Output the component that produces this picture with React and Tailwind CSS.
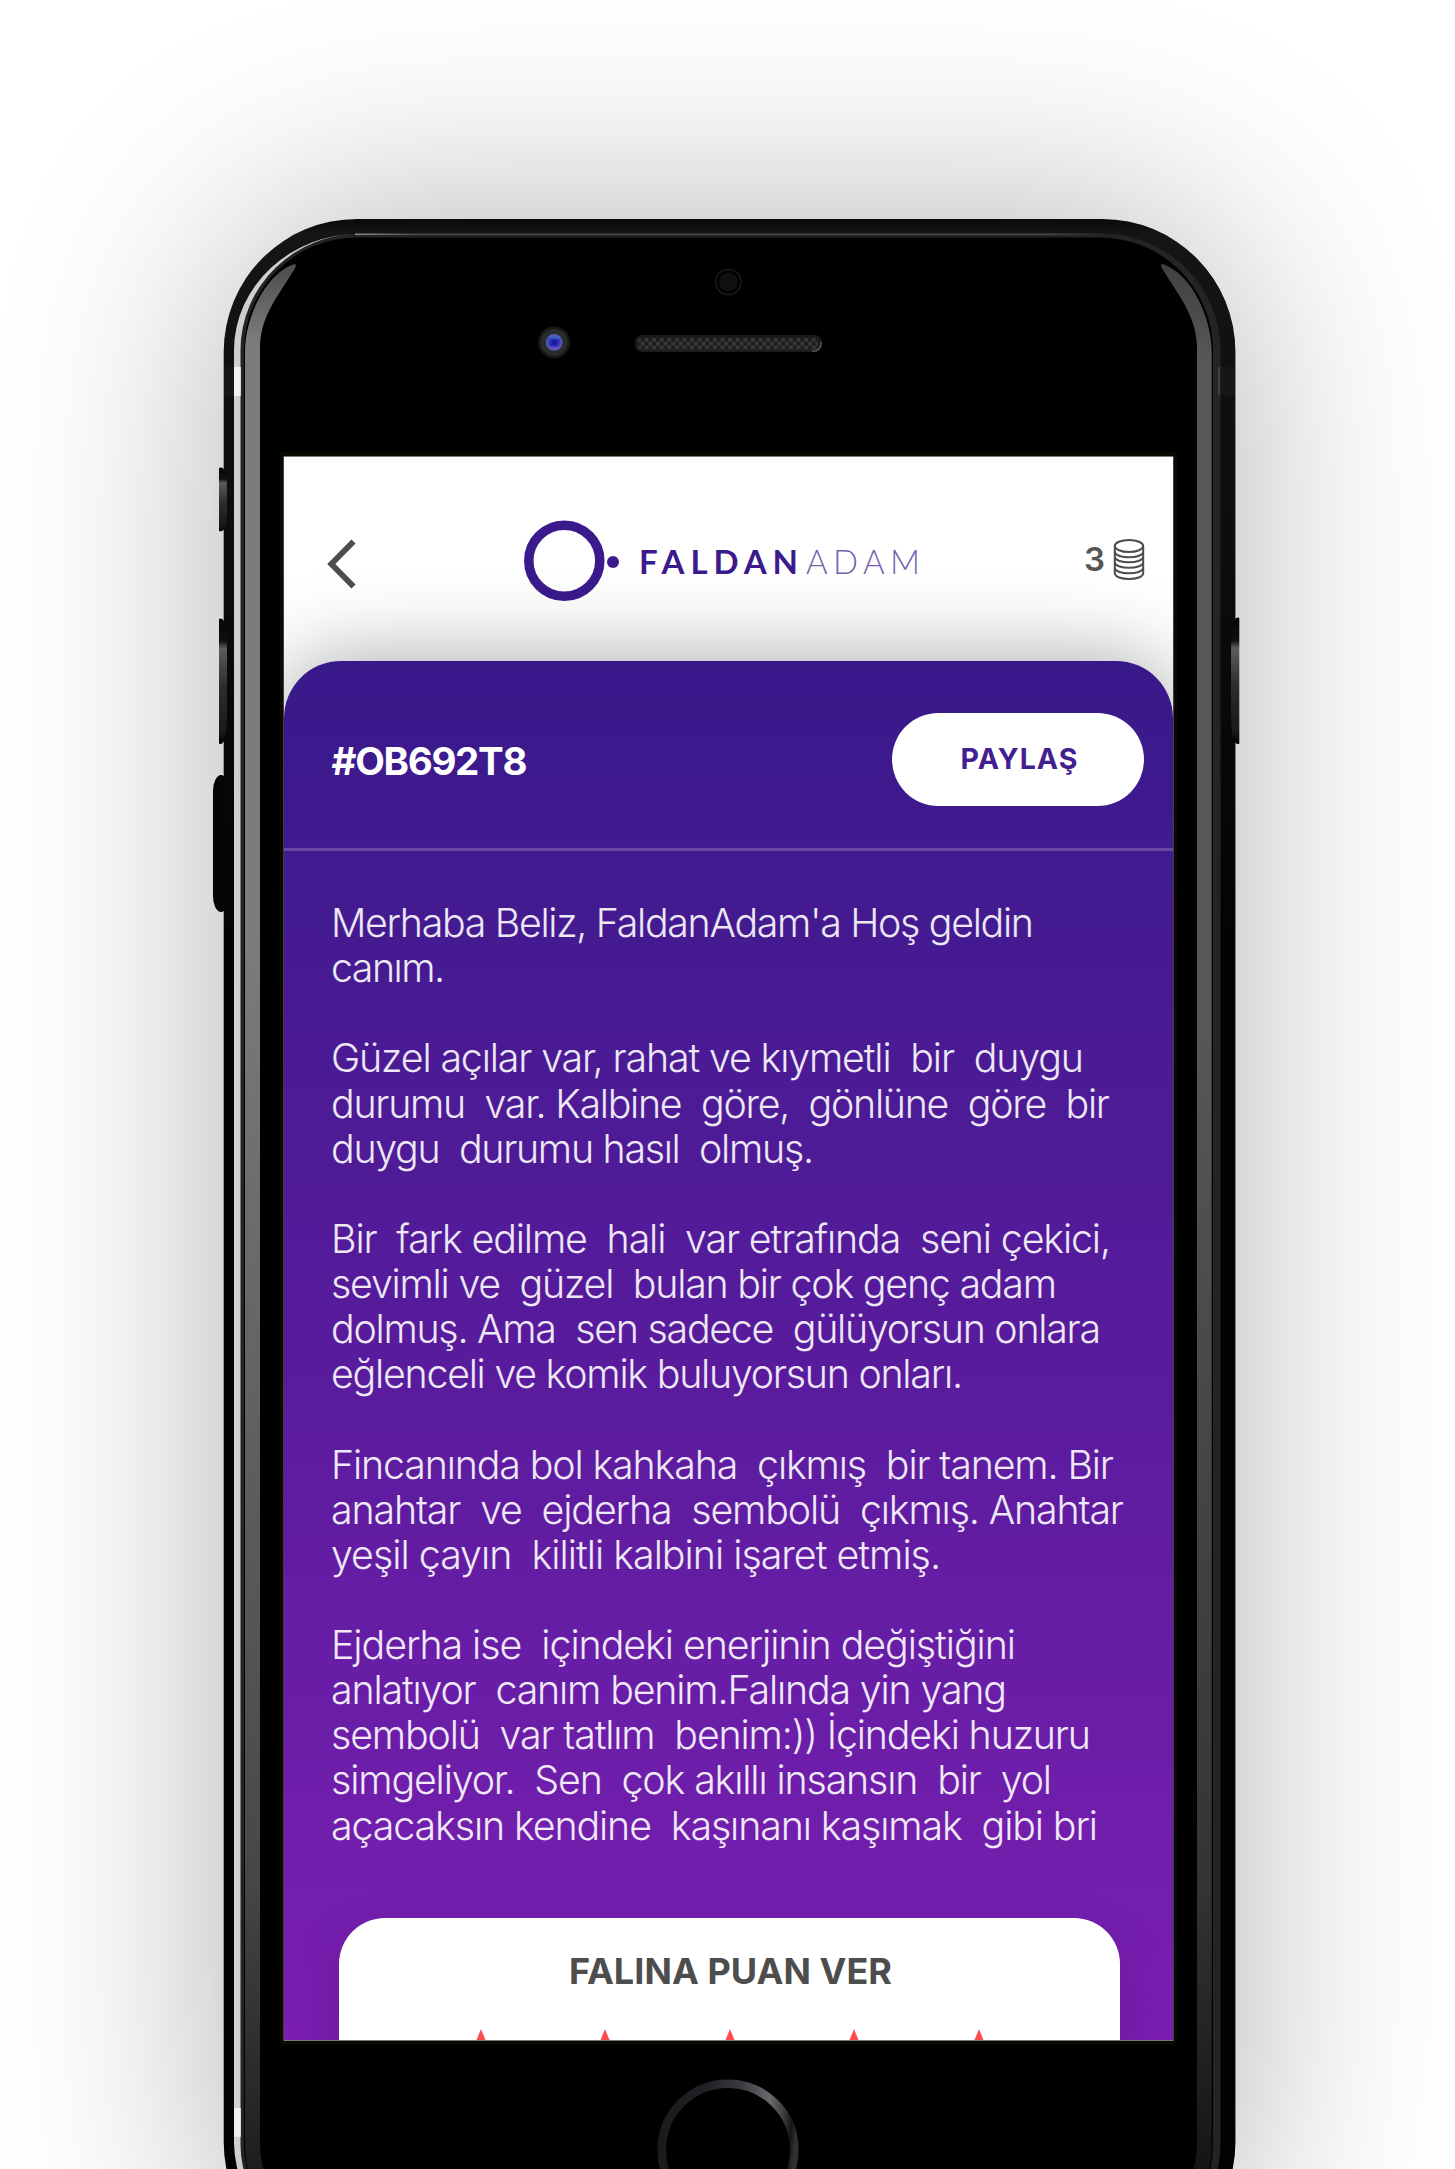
import { useLayoutEffect, useRef, useState } from "react";

/* Single line of text whose tracking is adjusted so that it spans `width` pixels. */
function FitText({ width, className = "", children }) {
  const ref = useRef(null);
  const [spacing, setSpacing] = useState(0);
  useLayoutEffect(() => {
    const el = ref.current;
    el.style.letterSpacing = "0px";
    const natural = el.getBoundingClientRect().width;
    const next = (width - natural) / (children.length - 1);
    el.style.letterSpacing = next + "px";
    setSpacing(next);
  }, [width, children]);
  return (
    <span ref={ref} className={"inline-block whitespace-pre " + className} style={{ letterSpacing: spacing }}>
      {children}
    </span>
  );
}

function Hardware() {
  return (
    <svg viewBox="224 219 1012 2056" className="absolute inset-0 h-[2056px] w-[1012px] overflow-visible" aria-hidden="true">
      <defs>
        <linearGradient id="body" gradientUnits="userSpaceOnUse" x1="0" y1="219" x2="0" y2="1000">
          <stop offset="0" stopColor="#0a0a0a" />
          <stop offset="0.02" stopColor="#151515" />
          <stop offset="0.2" stopColor="#101010" />
          <stop offset="1" stopColor="#020202" />
        </linearGradient>
        <linearGradient id="rimLine" x1="0" y1="0" x2="1" y2="0">
          <stop offset="0" stopColor="#8a8a8a" />
          <stop offset="0.08" stopColor="#4b4b4e" />
          <stop offset="0.92" stopColor="#4b4b4e" />
          <stop offset="1" stopColor="#242428" />
        </linearGradient>
        <linearGradient id="silver" gradientUnits="userSpaceOnUse" x1="234" y1="0" x2="361" y2="0">
          <stop offset="0" stopColor="#cfcfcf" />
          <stop offset="0.7" stopColor="#cfcfcf" />
          <stop offset="1" stopColor="#6a6a6a" />
        </linearGradient>
        <linearGradient id="leftGlow" gradientUnits="userSpaceOnUse" x1="0" y1="264" x2="0" y2="2169">
          <stop offset="0" stopColor="#4c4c4c" />
          <stop offset="0.04" stopColor="#7c7c7c" />
          <stop offset="0.35" stopColor="#7c7c7c" />
          <stop offset="0.85" stopColor="#474747" />
          <stop offset="1" stopColor="#1d1d1d" />
        </linearGradient>
        <linearGradient id="rightGlow" gradientUnits="userSpaceOnUse" x1="0" y1="264" x2="0" y2="2169">
          <stop offset="0" stopColor="#404040" />
          <stop offset="0.05" stopColor="#575757" />
          <stop offset="0.4" stopColor="#575757" />
          <stop offset="0.85" stopColor="#343434" />
          <stop offset="1" stopColor="#151515" />
        </linearGradient>
        <linearGradient id="btn" x1="0" y1="0" x2="0" y2="1">
          <stop offset="0" stopColor="#050505" />
          <stop offset="0.18" stopColor="#101010" />
          <stop offset="0.24" stopColor="#5c5c5c" />
          <stop offset="0.55" stopColor="#2c2c2c" />
          <stop offset="0.9" stopColor="#191919" />
          <stop offset="1" stopColor="#000" />
        </linearGradient>
        <linearGradient id="home" x1="0" y1="0.4" x2="1" y2="0.5">
          <stop offset="0" stopColor="#1b1b1f" />
          <stop offset="0.3" stopColor="#222226" />
          <stop offset="0.55" stopColor="#3a3b40" />
          <stop offset="0.78" stopColor="#68696c" />
          <stop offset="0.9" stopColor="#3a3b3d" />
          <stop offset="0.96" stopColor="#131519" />
          <stop offset="1" stopColor="#2e3033" />
        </linearGradient>
        <radialGradient id="iris">
          <stop offset="0" stopColor="#140fa0" />
          <stop offset="0.5" stopColor="#2a2fb0" />
          <stop offset="1" stopColor="#5a62b8" />
        </radialGradient>
        <pattern id="mesh" width="7.6" height="7.6" patternUnits="userSpaceOnUse" x="637" y="338">
          <rect width="7.6" height="7.6" fill="#1d1d1d" />
          <rect width="3.8" height="3.8" fill="#373737" />
          <rect x="3.8" y="3.8" width="3.8" height="3.8" fill="#373737" />
        </pattern>
      </defs>

      {/* mute switch and chassis */}
      <rect x="213" y="775" width="16" height="137" rx="8" ry="16" fill="#050505" />
      <rect x="223.7" y="219" width="1011.8" height="2056" rx="133" fill="url(#body)" />
      <rect x="224" y="367" width="1011" height="28.5" fill="#161616" />

      {/* volume and power buttons */}
      <path d="M219 468Q227 464 227 490V510Q227 534 219 531Z" fill="url(#btn)" />
      <path d="M219 619Q227 614 227 650V712Q227 748 219 743.500Z" fill="url(#btn)" />
      <path d="M1239.300 618Q1231 614 1231 650V712Q1231 748 1239.300 743.500Z" fill="url(#btn)" />

      {/* inner rim */}
      <rect x="240" y="234" width="980.5" height="2026" rx="117" fill="#242428" />
      <path d="M355 233.6H1105V235H355Z" fill="url(#rimLine)" />
      <path
        d="M234 350A127 117 0 0 1 361 233.4A120.5 116.6 0 0 0 240.5 350V2143A120.5 115 0 0 0 361 2259A127 117 0 0 1 234 2143Z"
        fill="url(#silver)"
      />
      <rect x="234" y="367" width="6.8" height="28.8" fill="#f2f2f2" />
      <rect x="234" y="2108" width="6.8" height="28.8" fill="#efefef" />
      <path d="M1219 367V395M1212 2108V2137" stroke="#47474b" strokeWidth="1.6" />
      <rect x="244" y="237.5" width="969" height="2020" rx="113" fill="#000" />

      {/* edge reflections */}
      <path
        d="M245 352C245 318 265 275 293 264.500C296 263.500 297 265 294.500 269C279 295 260 316 260 348V2143C260 2175 275 2200 290 2225L278 2220C258 2200 245 2180 245 2143Z"
        fill="url(#leftGlow)"
      />
      <path
        d="M1211.700 352C1211.700 318 1192 275 1164 264.500C1161 263.500 1160 265 1162.500 269C1178 295 1197 316 1197 348V2143C1197 2175 1182 2200 1167 2225L1179 2220C1199 2200 1211.700 2180 1211.700 2143Z"
        fill="url(#rightGlow)"
      />

      {/* sensor, camera and speaker */}
      <circle cx="728.4" cy="282" r="12.6" fill="#000" stroke="#1c1c1c" strokeWidth="1.5" />
      <circle cx="728.4" cy="282" r="9.6" fill="#110f10" />
      <circle cx="554.2" cy="342.4" r="16" fill="#171717" />
      <circle cx="554.2" cy="342.4" r="13.500" fill="#2a2b2c" />
      <circle cx="554.2" cy="342.4" r="8.300" fill="url(#iris)" />
      <ellipse cx="554.5" cy="337" rx="5" ry="2" fill="#4a7fd0" opacity="0.45" />
      <ellipse cx="554.5" cy="348" rx="5" ry="2" fill="#8a4fd0" opacity="0.45" />
      <rect x="635" y="335" width="187" height="17" rx="7" fill="#1b1b1b" />
      <rect x="638" y="338" width="180" height="11.400" rx="4" fill="url(#mesh)" />
      <path d="M812 351.300C818 351.300 821 348 821.300 342" fill="none" stroke="#555" strokeWidth="1.500" />

      {/* display gasket and home button */}
      <rect x="279.5" y="451.500" width="897.5" height="1593.500" rx="4" fill="#0c0900" />
      <rect x="283.500" y="456" width="890" height="1585" fill="#777" />
      <circle cx="728" cy="2150" r="66.300" fill="#000" stroke="url(#home)" strokeWidth="8.600" />
    </svg>
  );
}

function Logo() {
  return (
    <div className="flex items-center">
      <svg viewBox="0 0 85 84" className="h-[84px] w-[85px]">
        <circle cx="42.300" cy="41.700" r="35.500" fill="none" stroke="#3b1a8c" strokeWidth="9.500" />
      </svg>
      <span className="mt-[2px] size-3 rounded-full bg-[#3b1a8c]" />
      <div className="mt-[1px] ml-[20px] flex font-['Lato'] text-[33px] leading-none text-[#3b1a8c]">
        <FitText width={159} className="font-bold">FALDAN</FitText>
        <div className="ml-[2px] opacity-70">
          <FitText width={114} className="font-light">ADAM</FitText>
        </div>
      </div>
    </div>
  );
}

function Coins() {
  return (
    <svg viewBox="0 0 32 43" className="h-[43px] w-8" fill="none" stroke="#4d4d4d" strokeWidth="2">
      <ellipse cx="16" cy="8" rx="14.200" ry="6" />
      <path d="M1.800 8V35C1.800 43 30.200 43 30.200 35V8" />
      <path d="M1.800 14C3 21 29 21 30.200 14M1.800 19C3 26 29 26 30.200 19M1.800 24.500C3 31.500 29 31.500 30.200 24.500M1.800 30C3 37 29 37 30.200 30" />
    </svg>
  );
}

const paragraphs = [
  [["Merhaba Beliz, FaldanAdam'a Hoş geldin", 703], ["canım.", 114]],
  [
    ["Güzel açılar var, rahat ve kıymetli  bir  duygu", 753],
    ["durumu  var. Kalbine  göre,  gönlüne  göre  bir", 779],
    ["duygu  durumu hasıl  olmuş.", 483],
  ],
  [
    ["Bir  fark edilme  hali  var etrafında  seni çekici,", 780],
    ["sevimli ve  güzel  bulan bir çok genç adam", 726],
    ["dolmuş. Ama  sen sadece  gülüyorsun onlara", 770],
    ["eğlenceli ve komik buluyorsun onları.", 632],
  ],
  [
    ["Fincanında bol kahkaha  çıkmış  bir tanem. Bir", 783],
    ["anahtar  ve  ejderha  sembolü  çıkmış. Anahtar", 793],
    ["yeşil çayın  kilitli kalbini işaret etmiş.", 610],
  ],
  [
    ["Ejderha ise  içindeki enerjinin değiştiğini", 685],
    ["anlatıyor  canım benim.Falında yin yang", 676],
    ["sembolü  var tatlım  benim:)) İçindeki huzuru", 760],
    ["simgeliyor.  Sen  çok akıllı insansın  bir  yol", 721],
    ["açacaksın kendine  kaşınanı kaşımak  gibi bri", 767],
  ],
];

function Star() {
  return (
    <svg viewBox="0 0 66 64" className="h-16 w-[66px] shrink-0">
      <path d="M33 0L42 22L66 24L48 40L53 64L33 51L13 64L18 40L0 24L24 22Z" fill="#ff4b4b" />
    </svg>
  );
}

export default function App() {
  return (
    <div className="h-[2169px] w-[1455px] overflow-hidden bg-white pt-[219px] pl-[224px] font-['Inter','Liberation_Sans',sans-serif]">
      <div className="relative h-[2056px] w-[1012px] rounded-[133px] pt-[238px] pl-[60px] shadow-[0_0_225px_rgba(0,0,0,0.31)]">
        <Hardware />
        <main className="relative flex h-[1583px] w-[889px] flex-col overflow-hidden bg-white">
          <header className="flex h-[204px] shrink-0 items-start pt-[62px] pl-[42px]">
            <svg viewBox="0 0 30 54" className="mt-[18px] h-[54px] w-[30px]" fill="none" stroke="#4d4d4d" strokeWidth="5.800">
              <path d="M27.500 4.500L5.300 27L27.500 49.500" />
            </svg>
            <div className="ml-[166px]">
              <Logo />
            </div>
            <div className="mr-[28px] ml-auto flex items-center gap-[8px] pt-[19px]">
              <span className="text-[33px] leading-[43px] font-semibold text-[#565656]">3</span>
              <Coins />
            </div>
          </header>

          <section className="relative flex h-[1380px] min-h-0 shrink-0 flex-col rounded-t-[57px] bg-linear-to-b from-[#38198a] via-[#581b9c] to-[#7b1fb2] shadow-[0_0_85px_rgba(0,0,0,0.36)]">
            <div className="flex h-[190px] shrink-0 items-start justify-between border-b-[3px] border-white/20 pr-[29px] pl-[47.5px]">
              <h1 className="mt-[76px] text-[38.500px] leading-[48px] font-bold text-white">
                <FitText width={196}>#OB692T8</FitText>
              </h1>
              <button className="mt-[52px] flex h-[93px] w-[252px] items-center justify-center rounded-full bg-white pl-[3px] text-[28.500px] leading-none font-bold text-[#42208f]">
                <FitText width={117}>PAYLAŞ</FitText>
              </button>
            </div>

            <div className="flex shrink-0 flex-col gap-[45.130px] pt-[49px] pl-[47px] text-[39.300px] font-light text-white/90">
              {paragraphs.map((lines, i) => (
                <p key={i} className="flex flex-col items-start">
                  {lines.map(([text, width]) => (
                    <FitText key={text} width={width} className="h-[45.130px] leading-[45.130px]">
                      {text}
                    </FitText>
                  ))}
                </p>
              ))}
            </div>

            <div className="mt-[70px] ml-[55px] flex h-[240px] w-[781px] shrink-0 flex-col items-center rounded-[46px] bg-white pt-[31px] shadow-[0_25px_50px_rgba(60,0,90,0.3)]">
              <h2 className="pl-[2px] text-[36px] leading-[44px] font-bold text-[#4d4d4d]">
                <FitText width={323}>FALINA PUAN VER</FitText>
              </h2>
              <div className="mt-[36px] flex gap-[58.500px]">
                {[0, 1, 2, 3, 4].map((n) => (
                  <Star key={n} />
                ))}
              </div>
            </div>
          </section>
        </main>
      </div>
    </div>
  );
}
